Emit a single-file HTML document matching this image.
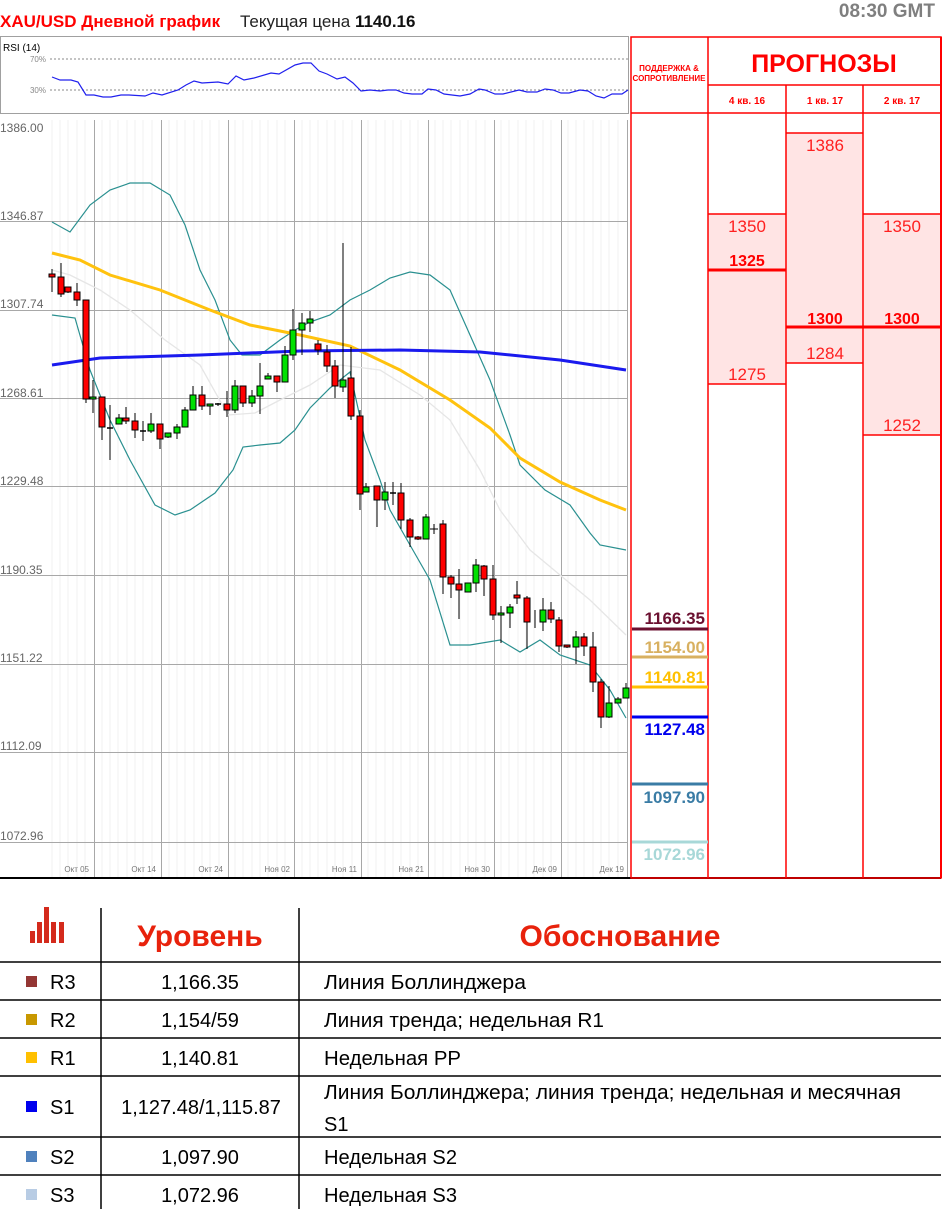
<!DOCTYPE html>
<html><head><meta charset="utf-8"><style>
html,body{margin:0;padding:0;background:#fff;width:951px;height:1209px;overflow:hidden}
svg{display:block}
text{font-family:"Liberation Sans","DejaVu Sans",sans-serif}
</style></head><body>
<svg width="951" height="1209" viewBox="0 0 951 1209" xmlns="http://www.w3.org/2000/svg">
<!-- header -->
<text x="0" y="27" font-size="17" font-weight="bold" fill="#ff0000">XAU/USD Дневной график</text>
<text x="240" y="27" font-size="17" fill="#222">Текущая цена <tspan font-weight="bold" fill="#111">1140.16</tspan></text>
<text x="935" y="17" font-size="19" font-weight="bold" fill="#7f7f7f" text-anchor="end">08:30 GMT</text>

<!-- RSI panel -->
<rect x="0.5" y="36.5" width="628" height="77" fill="#fff" stroke="#a0a0a0"/>
<text x="3" y="51" font-size="10" fill="#000">RSI (14)</text>
<text x="46" y="62" font-size="8" fill="#888" text-anchor="end">70%</text>
<text x="46" y="93" font-size="8" fill="#888" text-anchor="end">30%</text>
<line x1="50" y1="59" x2="628" y2="59" stroke="#888" stroke-dasharray="2,2"/>
<line x1="50" y1="90" x2="628" y2="90" stroke="#888" stroke-dasharray="2,2"/>
<polyline fill="none" stroke="#2020ee" stroke-width="1.2" points="52,77 60,80 71,80 78,82 86,95 94,95 103,97 111,97 121,95 129,95 145,96 153,93 162,95 178,90 186,85 194,81 202,83 218,82 228,84 236,76 244,80 254,78 271,73 279,74 295,65 303,63 311,63 319,71 327,74 337,79 345,77 353,83 361,91 370,90 380,91 388,90 396,90 404,93 412,94 422,94 428,89 436,90 444,94 460,96 470,94 479,89 485,90 495,94 503,94 519,90 527,92 537,92 545,89 553,90 561,93 569,93 580,90 588,91 596,96 604,98 612,94 622,94 628,90"/>

<!-- minor verticals -->
<g stroke="#f0f0f0" stroke-width="1">
<path d="M52 120V878M60 120V878M68 120V878M77 120V878M85 120V878M102 120V878M110 120V878M118 120V878M127 120V878M135 120V878M143 120V878M152 120V878M169 120V878M177 120V878M185 120V878M194 120V878M202 120V878M210 120V878M219 120V878M235 120V878M243 120V878M252 120V878M260 120V878M268 120V878M277 120V878M285 120V878M302 120V878M310 120V878M318 120V878M327 120V878M335 120V878M343 120V878M352 120V878M368 120V878M376 120V878M385 120V878M393 120V878M401 120V878M410 120V878M418 120V878M435 120V878M443 120V878M451 120V878M460 120V878M468 120V878M476 120V878M485 120V878M501 120V878M509 120V878M518 120V878M526 120V878M534 120V878M543 120V878M551 120V878M568 120V878M576 120V878M584 120V878M593 120V878M601 120V878M609 120V878M618 120V878"/>
</g>
<!-- major grid -->
<g stroke="#a8a8a8" stroke-width="1">
<path d="M94.5 120V878M161.5 120V878M228.5 120V878M294.5 120V878M361.5 120V878M428.5 120V878M494.5 120V878M561.5 120V878M627.5 120V878"/>
<path d="M0 221.5H628M0 310.5H628M0 398.5H628M0 486.5H628M0 575.5H628M0 664.5H628M0 752.5H628M0 842.5H628"/>
</g>
<g font-size="12" fill="#666">
<text x="0" y="132">1386.00</text><text x="0" y="220">1346.87</text><text x="0" y="308">1307.74</text><text x="0" y="397">1268.61</text><text x="0" y="485">1229.48</text><text x="0" y="574">1190.35</text><text x="0" y="662">1151.22</text><text x="0" y="750">1112.09</text><text x="0" y="840">1072.96</text>
</g>
<g font-size="8" fill="#777" text-anchor="end">
<text x="89" y="872">Окт 05</text><text x="156" y="872">Окт 14</text><text x="223" y="872">Окт 24</text><text x="290" y="872">Ноя 02</text><text x="357" y="872">Ноя 11</text><text x="424" y="872">Ноя 21</text><text x="490" y="872">Ноя 30</text><text x="557" y="872">Дек 09</text><text x="624" y="872">Дек 19</text>
</g>
<line x1="0" y1="878" x2="941" y2="878" stroke="#000" stroke-width="2"/>

<!-- indicator lines -->
<polyline fill="none" stroke="#e6e6e6" stroke-width="1.3" points="52,270 70,275 100,290 130,310 165,340 200,365 228,415 255,413 280,400 310,385 340,365 380,370 420,395 450,420 480,470 500,510 530,550 560,575 590,600 626,635"/>
<polyline fill="none" stroke="#2a9090" stroke-width="1.2" points="52,222 70,232 90,205 110,190 130,183 150,183 170,195 185,225 200,270 215,300 230,340 242,355 260,355 280,340 295,330 310,322 330,315 350,300 370,290 390,278 410,272 430,275 450,290 470,335 490,380 510,435 520,465 545,490 570,505 590,533 600,545 626,550"/>
<polyline fill="none" stroke="#2a9090" stroke-width="1.2" points="52,315 75,318 90,370 110,420 130,460 155,505 175,515 190,510 215,493 233,470 243,447 260,445 280,443 295,430 310,408 330,388 350,372 365,440 380,480 390,510 410,545 430,580 450,645 470,645 500,640 520,652 540,640 560,655 590,665 610,690 626,718"/>
<polyline fill="none" stroke="#ffc20e" stroke-width="3" points="52,253 80,260 110,275 160,290 210,310 250,325 300,335 350,346 400,370 450,400 490,428 520,458 560,482 600,500 626,510"/>
<polyline fill="none" stroke="#1a1aee" stroke-width="3" points="52,365 100,358 200,355 300,351 400,350 480,352 560,360 626,370"/>

<!-- candles -->
<g stroke="#000" stroke-width="1">
<path d="M52 269V292M61 263V297M68 287V293M77 283V306M86 300V403M93 380V413M102 397V440M110 405V460M119 414V424M126 407V424M135 413V438M143 421V441M151 413V433M160 424V449M168 433V438M177 424V439M185 407V427M193 386V410M202 386V410M210 404V415M218 403V406M227 391V417M235 380V413M243 386V407M252 390V407M260 363V414M268 373V379M277 376V392M285 346V382M293 309V360M302 313V355M310 311V332M318 340V355M327 345V372M335 360V398M343 243V392M351 347V420M360 410V510M366 483V492M377 486V527M385 482V510M393 482V505M401 483V529M410 518V547M418 536V540M426 514V539M434 524V534M443 520V594M451 575V598M459 569V619M468 583V592M476 559V592M484 565V596M493 565V620M501 606V643M510 604V628M517 581V604M527 596V649M535 610V628M543 598V631M551 602V623M559 617V652M567 645V648M576 631V664M584 633V656M593 632V692M601 679V728M609 686V718M618 697V703M626 683V698"/>
<path d="M430 529H438"/>
</g>
<g stroke="#000" stroke-width="1" fill="#ff0000">
<rect x="49" y="274" width="6" height="3"/><rect x="58" y="277" width="6" height="17"/><rect x="65" y="287" width="6" height="5"/><rect x="74" y="292" width="6" height="8"/><rect x="83" y="300" width="6" height="99"/><rect x="99" y="397" width="6" height="30"/><rect x="123" y="418" width="6" height="3"/><rect x="132" y="421" width="6" height="9"/><rect x="157" y="424" width="6" height="15"/><rect x="199" y="395" width="6" height="11"/><rect x="224" y="404" width="6" height="6"/><rect x="240" y="386" width="6" height="17"/><rect x="274" y="376" width="6" height="6"/><rect x="315" y="344" width="6" height="6"/><rect x="324" y="352" width="6" height="14"/><rect x="332" y="366" width="6" height="20"/><rect x="348" y="378" width="6" height="38"/><rect x="357" y="416" width="6" height="78"/><rect x="374" y="486" width="6" height="14"/><rect x="398" y="493" width="6" height="27"/><rect x="407" y="520" width="6" height="17"/><rect x="415" y="537" width="6" height="2"/><rect x="440" y="524" width="6" height="53"/><rect x="448" y="577" width="6" height="7"/><rect x="456" y="584" width="6" height="6"/><rect x="481" y="566" width="6" height="13"/><rect x="490" y="579" width="6" height="36"/><rect x="514" y="595" width="6" height="3"/><rect x="524" y="598" width="6" height="24"/><rect x="548" y="610" width="6" height="9"/><rect x="556" y="620" width="6" height="26"/><rect x="564" y="645" width="6" height="2"/><rect x="581" y="637" width="6" height="9"/><rect x="590" y="647" width="6" height="35"/><rect x="598" y="682" width="6" height="35"/>
</g>
<g stroke="#000" stroke-width="1" fill="#00e000">
<rect x="90" y="397" width="6" height="2"/><rect x="116" y="418" width="6" height="6"/><rect x="148" y="424" width="6" height="7"/><rect x="165" y="433" width="6" height="4"/><rect x="174" y="427" width="6" height="6"/><rect x="182" y="410" width="6" height="17"/><rect x="190" y="395" width="6" height="15"/><rect x="207" y="404" width="6" height="2"/><rect x="232" y="386" width="6" height="24"/><rect x="249" y="396" width="6" height="7"/><rect x="257" y="386" width="6" height="10"/><rect x="265" y="376" width="6" height="3"/><rect x="282" y="355" width="6" height="27"/><rect x="290" y="330" width="6" height="25"/><rect x="299" y="323" width="6" height="7"/><rect x="307" y="319" width="6" height="4"/><rect x="340" y="380" width="6" height="7"/><rect x="363" y="487" width="6" height="5"/><rect x="382" y="492" width="6" height="8"/><rect x="423" y="517" width="6" height="22"/><rect x="465" y="583" width="6" height="9"/><rect x="473" y="565" width="6" height="18"/><rect x="498" y="613" width="6" height="2"/><rect x="507" y="607" width="6" height="6"/><rect x="540" y="610" width="6" height="12"/><rect x="573" y="637" width="6" height="10"/><rect x="606" y="703" width="6" height="14"/><rect x="615" y="699" width="6" height="4"/><rect x="623" y="688" width="6" height="10"/>
</g>
<g stroke="#000" stroke-width="1.5"><path d="M107 428H113M140 431H146M215 404H221M390 493H396"/></g>

<!-- Right panel -->
<rect x="786" y="133" width="77" height="230" fill="#ffe4e4"/>
<rect x="708" y="214" width="78" height="170" fill="#ffe4e4"/>
<rect x="863" y="214" width="78" height="221" fill="#ffe4e4"/>
<g stroke="#ff0000" stroke-width="1.5" fill="none">
<rect x="631" y="37" width="310" height="841"/>
<path d="M631 113H941M708 37V878M786 85V878M863 85V878M708 85H941"/>
<path d="M708 214H786M708 384H786M786 363H863M863 214H941M863 435H941M786 133H863"/>
</g>
<g stroke="#ff0000" stroke-width="3"><path d="M708 270H786M786 327H941"/></g>
<line x1="941" y1="37" x2="941" y2="878" stroke="#ff0000" stroke-width="2"/>
<text x="669" y="71" font-size="8" font-weight="bold" fill="#ff0000" text-anchor="middle">ПОДДЕРЖКА &amp;</text>
<text x="669" y="81" font-size="8" font-weight="bold" fill="#ff0000" text-anchor="middle">СОПРОТИВЛЕНИЕ</text>
<text x="824" y="72" font-size="25" font-weight="bold" fill="#ff0000" text-anchor="middle">ПРОГНОЗЫ</text>
<g font-size="10" font-weight="bold" fill="#ff0000" text-anchor="middle">
<text x="747" y="104">4 кв. 16</text><text x="825" y="104">1 кв. 17</text><text x="902" y="104">2 кв. 17</text>
</g>
<g font-size="17" fill="#ff2020" text-anchor="middle">
<text x="747" y="232">1350</text><text x="747" y="380">1275</text><text x="825" y="151">1386</text><text x="825" y="359">1284</text><text x="902" y="232">1350</text><text x="902" y="431">1252</text>
</g>
<g font-size="16" font-weight="bold" fill="#ff0000" text-anchor="middle">
<text x="747" y="266">1325</text><text x="825" y="324">1300</text><text x="902" y="324">1300</text>
</g>
<!-- S/R lines -->
<g stroke-width="3">
<line x1="632" y1="629" x2="708" y2="629" stroke="#6b1030"/>
<line x1="632" y1="657" x2="708" y2="657" stroke="#d8b060"/>
<line x1="632" y1="687" x2="708" y2="687" stroke="#ffc000"/>
<line x1="632" y1="717" x2="708" y2="717" stroke="#0000ee"/>
<line x1="632" y1="784" x2="708" y2="784" stroke="#3a7ca5"/>
<line x1="632" y1="842" x2="708" y2="842" stroke="#a8d8d8"/>
</g>
<g font-size="17" font-weight="bold" text-anchor="end">
<text x="705" y="624" fill="#6b1030">1166.35</text>
<text x="705" y="653" fill="#d8b060">1154.00</text>
<text x="705" y="683" fill="#ffc000">1140.81</text>
<text x="705" y="735" fill="#0000ee">1127.48</text>
<text x="705" y="803" fill="#3a7ca5">1097.90</text>
<text x="705" y="860" fill="#a8d8d8">1072.96</text>
</g>

<!-- Table -->
<g fill="#d42a1c">
<rect x="30" y="931" width="5" height="12"/><rect x="37" y="922" width="5" height="21"/><rect x="44" y="907" width="5" height="36"/><rect x="51" y="922" width="5" height="21"/><rect x="59" y="922" width="5" height="21"/>
</g>
<g stroke="#000" stroke-width="1.5">
<path d="M101 908V1209M299 908V1209"/>
<path d="M0 962H941M0 1000H941M0 1038H941M0 1076H941M0 1137H941M0 1175H941"/>
</g>
<text x="200" y="946" font-size="30" font-weight="bold" fill="#e8220c" text-anchor="middle">Уровень</text>
<text x="620" y="946" font-size="30" font-weight="bold" fill="#e8220c" text-anchor="middle">Обоснование</text>
<rect x="26" y="976" width="11" height="11" fill="#943634"/>
<rect x="26" y="1014" width="11" height="11" fill="#c89800"/>
<rect x="26" y="1052" width="11" height="11" fill="#ffc000"/>
<rect x="26" y="1101" width="11" height="11" fill="#0000ee"/>
<rect x="26" y="1151" width="11" height="11" fill="#4f81bd"/>
<rect x="26" y="1189" width="11" height="11" fill="#b8cce4"/>
<g font-size="20" fill="#000">
<text x="50" y="989">R3</text><text x="50" y="1027">R2</text><text x="50" y="1065">R1</text><text x="50" y="1114">S1</text><text x="50" y="1164">S2</text><text x="50" y="1202">S3</text>
<g text-anchor="middle">
<text x="200" y="989">1,166.35</text><text x="200" y="1027">1,154/59</text><text x="200" y="1065">1,140.81</text><text x="201" y="1114" font-size="20">1,127.48/1,115.87</text><text x="200" y="1164">1,097.90</text><text x="200" y="1202">1,072.96</text>
</g>
<text x="324" y="989" textLength="202" lengthAdjust="spacingAndGlyphs">Линия Боллинджера</text>
<text x="324" y="1027" textLength="280" lengthAdjust="spacingAndGlyphs">Линия тренда; недельная R1</text>
<text x="324" y="1065" textLength="137" lengthAdjust="spacingAndGlyphs">Недельная PP</text>
<text x="324" y="1099" textLength="577" lengthAdjust="spacingAndGlyphs">Линия Боллинджера; линия тренда; недельная и месячная</text>
<text x="324" y="1131">S1</text>
<text x="324" y="1164" textLength="133" lengthAdjust="spacingAndGlyphs">Недельная S2</text>
<text x="324" y="1202" textLength="133" lengthAdjust="spacingAndGlyphs">Недельная S3</text>
</g>
</svg>
</body></html>
